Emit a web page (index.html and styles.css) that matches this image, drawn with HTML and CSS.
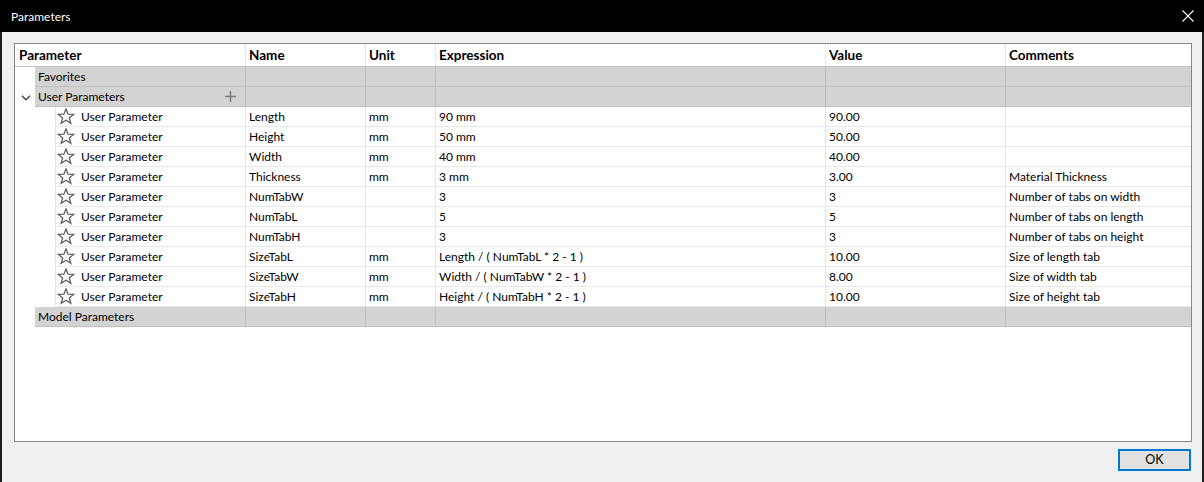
FILE: index.html
```html
<!DOCTYPE html>
<html>
<head>
<meta charset="utf-8">
<link rel="stylesheet" href="styles.css">
</head>
<body>
<div class="window">
  <div class="titlebar">
    <span class="title">Parameters</span>
    <svg class="close" width="12" height="12" viewBox="0 0 12 12"><path d="M0.5 0.5 L11.5 11.5 M11.5 0.5 L0.5 11.5" stroke="#fff" stroke-width="1.1" fill="none"/></svg>
  </div>
  <div class="content">
    <div class="panel">
      <div class="row head">
        <div class="c first">Parameter</div>
        <div class="c">Name</div>
        <div class="c">Unit</div>
        <div class="c">Expression</div>
        <div class="c">Value</div>
        <div class="c">Comments</div>
      </div>
      <div class="row group">
        <div class="c first"><span class="indent"></span><span class="label">Favorites</span></div>
        <div class="c"></div><div class="c"></div><div class="c"></div><div class="c"></div><div class="c"></div>
      </div>
      <div class="row group">
        <div class="c first"><span class="indent"><svg width="10" height="6" viewBox="0 0 10 6"><path d="M1 0.8 L5 4.8 L9 0.8" stroke="#3c3c3c" stroke-width="1.3" fill="none"/></svg></span><span class="label">User Parameters<svg class="plus" width="11" height="11" viewBox="0 0 11 11"><path d="M5.5 0 V11 M0 5.5 H11" stroke="#7a7a7a" stroke-width="1.5"/></svg></span></div>
        <div class="c"></div><div class="c"></div><div class="c"></div><div class="c"></div><div class="c"></div>
      </div>
      <div id="rows"></div>
      <div class="row group">
        <div class="c first"><span class="indent"></span><span class="label">Model Parameters</span></div>
        <div class="c"></div><div class="c"></div><div class="c"></div><div class="c"></div><div class="c"></div>
      </div>
    </div>
  </div>
  <div class="footer">
    <button class="ok">OK</button>
  </div>
</div>
<script src="app.js"></script>
</body>
</html>
```
FILE: app.js
```js
const data = [
  ["Length","mm","90 mm","90.00",""],
  ["Height","mm","50 mm","50.00",""],
  ["Width","mm","40 mm","40.00",""],
  ["Thickness","mm","3 mm","3.00","Material Thickness"],
  ["NumTabW","","3","3","Number of tabs on width"],
  ["NumTabL","","5","5","Number of tabs on length"],
  ["NumTabH","","3","3","Number of tabs on height"],
  ["SizeTabL","mm","Length / ( NumTabL * 2 - 1 )","10.00","Size of length tab"],
  ["SizeTabW","mm","Width / ( NumTabW * 2 - 1 )","8.00","Size of width tab"],
  ["SizeTabH","mm","Height / ( NumTabH * 2 - 1 )","10.00","Size of height tab"]
];
const star = '<svg class="star" width="18" height="17" viewBox="0 0 18 17"><polygon points="9,1 11.1,6.2 16.6,6.4 12.3,9.9 13.8,15.4 9,12.3 4.2,15.4 5.7,9.9 1.4,6.4 6.9,6.2" fill="none" stroke="#5f5f5f" stroke-width="1.3" stroke-linejoin="miter"/></svg>';
const host = document.getElementById("rows");
host.innerHTML = data.map(r =>
  '<div class="row item"><div class="c first"><span class="indent2"></span><span class="label">' + star + 'User Parameter</span></div>' +
  r.map(v => '<div class="c">' + v + '</div>').join("") + '</div>'
).join("");
```
FILE: styles.css
```css
* { box-sizing: border-box; }
html, body { margin: 0; padding: 0; }
body {
  font-family: Lato, "Noto Sans", sans-serif;
  font-size: 12px;
  color: #000;
  width: 1204px;
  height: 482px;
  overflow: hidden;
}
.window {
  width: 1204px;
  height: 482px;
  display: flex;
  flex-direction: column;
  background: #f0f0f0;
  border-left: 2px solid #1e1e1e;
  border-right: 2px solid #1e1e1e;
}
.titlebar {
  height: 32px;
  flex: none;
  background: #000;
  color: #fff;
  display: flex;
  align-items: center;
  justify-content: space-between;
  margin: 0 -2px;
  padding: 0 10px 0 11px;
}
.title { font-size: 12px; }
.content {
  padding: 11px 10px 0 12px;
}
.panel {
  height: 399px;
  background: #fff;
  border: 1px solid #828790;
}
.row {
  display: grid;
  grid-template-columns: 230px 120px 70px 390px 180px 1fr;
  height: 20px;
}
.c {
  border-left: 1px solid #e5e5e5;
  border-bottom: 1px solid #e8e8e8;
  padding-left: 3px;
  line-height: 19px;
  white-space: nowrap;
  overflow: hidden;
}
.c.first { border-left: none; }
.head { height: 23px; }
.head .c {
  font-weight: bold;
  font-size: 13.5px;
  line-height: 22px;
  border-bottom-color: #c4c4c4;
}
.head .c.first { padding-left: 4px; }
.group .c {
  background: #d3d3d3;
  border-left-color: #bcbcbc;
  border-bottom-color: #c0c0c0;
}
.group .c.first,
.item .c.first {
  display: flex;
  padding-left: 0;
  background: transparent;
  border-bottom: none;
}
.indent {
  width: 20px;
  flex: none;
  display: flex;
  align-items: center;
  justify-content: center;
  padding-left: 1px;
  padding-top: 1px;
}
.indent2 { width: 40px; flex: none; }
.label {
  flex: 1;
  display: flex;
  align-items: center;
  height: 20px;
  padding-left: 3px;
  position: relative;
}
.group .label {
  background: #d3d3d3;
  border-bottom: 1px solid #c0c0c0;
}
.plus { position: absolute; right: 9px; top: 4px; }
.item .label {
  border-left: 1px solid #e5e5e5;
  border-bottom: 1px solid #e8e8e8;
  padding-left: 1px;
}
.star { margin-right: 6px; margin-top: -1px; }
.footer {
  display: flex;
  justify-content: flex-end;
  padding: 7px 11px 0 0;
}
.ok {
  width: 73px;
  height: 22px;
  background: #e1e1e1;
  border: 2px solid #0078d7;
  font-family: Lato, "Noto Sans", sans-serif;
  font-size: 12.5px;
  color: #000;
  padding: 0;
  line-height: 16px;
}
```
